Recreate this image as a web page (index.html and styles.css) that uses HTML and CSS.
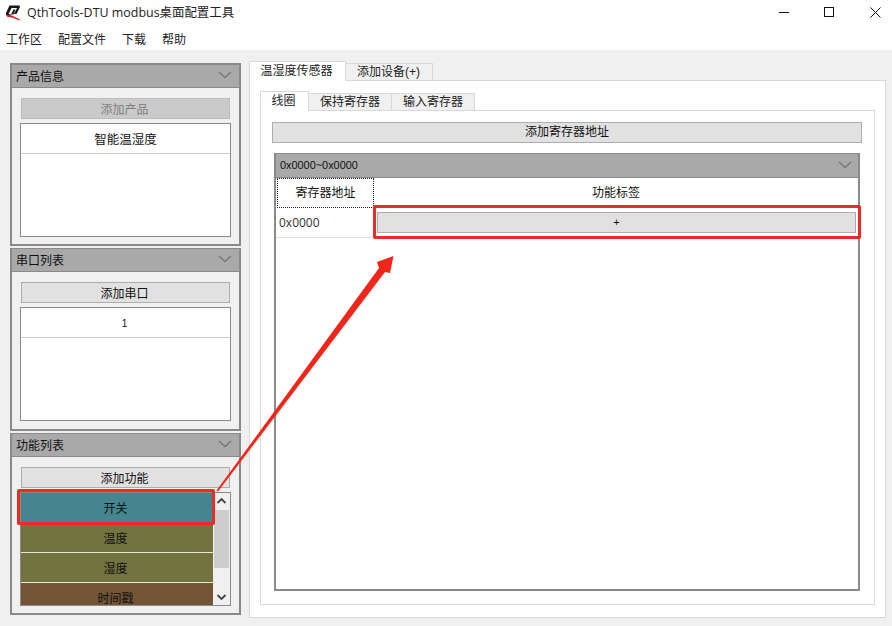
FILE: index.html
```html
<!DOCTYPE html>
<html lang="zh-CN">
<head>
<meta charset="utf-8">
<title>QthTools-DTU modbus桌面配置工具</title>
<link rel="stylesheet" href="styles.css">
</head>
<body>
<div class="window">
  <header class="titlebar">
    <svg class="logo" width="16" height="16" viewBox="0 0 16 16">
      <path d="M4.500 .5H14.500L15 2L11.500 9H9L12 3H6.500L3.500 9L6 9.500L5.500 11L1 10L1 8Z" fill="#161616"/>
      <path d="M6 9.500L8.500 4.500H10.500L8.500 9.500Z" fill="#161616"/>
      <path d="M1 10L7 10.500L15 14.500L14.500 15.500L7 12.500L2.500 12Z" fill="#d3222c"/>
    </svg>
    <span class="title">QthTools-DTU modbus桌面配置工具</span>
    <div class="controls">
      <svg width="11" height="11" viewBox="0 0 11 11"><path d="M1 5.500h10" stroke="#111" fill="none"/></svg>
      <svg width="11" height="11" viewBox="0 0 11 11"><rect x=".5" y=".5" width="9" height="9" stroke="#111" fill="none"/></svg>
      <svg width="11" height="11" viewBox="0 0 11 11"><path d="M.5.5l10 10M10.500.5l-10 10" stroke="#111" fill="none"/></svg>
    </div>
  </header>
  <nav class="menubar">
    <span>工作区</span><span>配置文件</span><span>下载</span><span>帮助</span>
  </nav>
  <main class="main">
    <aside class="sidebar">
      <section class="section section-first">
        <div class="section-head"><span>产品信息</span><svg class="chev" width="14" height="8" viewBox="0 0 14 8"><path d="M1 1l6 5.500 6-5.500" stroke="#777" stroke-width="1.300" fill="none"/></svg></div>
        <div class="section-body">
          <div class="btn btn-disabled">添加产品</div>
          <div class="list">
            <div class="list-item">智能温湿度</div>
          </div>
        </div>
      </section>
      <section class="section">
        <div class="section-head"><span>串口列表</span><svg class="chev" width="14" height="8" viewBox="0 0 14 8"><path d="M1 1l6 5.500 6-5.500" stroke="#777" stroke-width="1.300" fill="none"/></svg></div>
        <div class="section-body">
          <div class="btn">添加串口</div>
          <div class="list">
            <div class="list-item list-num">1</div>
          </div>
        </div>
      </section>
      <section class="section section-last">
        <div class="section-head"><span>功能列表</span><svg class="chev" width="14" height="8" viewBox="0 0 14 8"><path d="M1 1l6 5.500 6-5.500" stroke="#777" stroke-width="1.300" fill="none"/></svg></div>
        <div class="section-body">
          <div class="btn">添加功能</div>
          <div class="list list-scroll">
            <div class="func-items">
              <div class="func func-teal">开关</div>
              <div class="func func-olive">温度</div>
              <div class="func func-olive">湿度</div>
              <div class="func func-brown">时间戳</div>
            </div>
            <div class="scrollbar">
              <svg class="sb-arrow" width="17" height="17" viewBox="0 0 17 17"><path d="M4.500 10l4-4 4 4" stroke="#444" stroke-width="1.800" fill="none"/></svg>
              <div class="sb-track"><div class="sb-thumb"></div></div>
              <svg class="sb-arrow" width="17" height="17" viewBox="0 0 17 17"><path d="M4.500 7l4 4 4-4" stroke="#444" stroke-width="1.800" fill="none"/></svg>
            </div>
          </div>
        </div>
      </section>
    </aside>
    <div class="content">
      <div class="tabs tabs-outer">
        <div class="tab tab-active tab-w1">温湿度传感器</div>
        <div class="tab tab-w2">添加设备(+)</div>
      </div>
      <div class="pane">
        <div class="tabs">
          <div class="tab tab-active tab-w3">线圈</div>
          <div class="tab tab-w4">保持寄存器</div>
          <div class="tab tab-w4">输入寄存器</div>
        </div>
        <div class="inner-pane">
          <div class="btn btn-wide">添加寄存器地址</div>
          <div class="reg-box">
            <div class="reg-head"><span>0x0000~0x0000</span><svg class="chev" width="14" height="8" viewBox="0 0 14 8"><path d="M1 1l6 5.500 6-5.500" stroke="#777" stroke-width="1.300" fill="none"/></svg></div>
            <div class="reg-row reg-row-head">
              <div class="cell-addr cell-focus">寄存器地址</div>
              <div class="cell-label">功能标签</div>
            </div>
            <div class="reg-row reg-row-data">
              <div class="cell-addr cell-value">0x0000</div>
              <div class="cell-label"><div class="btn btn-plus">+</div></div>
            </div>
          </div>
        </div>
      </div>
    </div>
  </main>
  <div class="mark mark-left"></div>
  <div class="mark mark-right"></div>
  <svg class="arrow" width="892" height="626" viewBox="0 0 892 626">
    <path d="M216.500 490.500L379 268L377 262L393.500 256L390 273L385 272L218 491.500Z" fill="#f1261a"/>
  </svg>
</div>
</body>
</html>
```
FILE: styles.css
```css
* { box-sizing: border-box; }
html, body { margin: 0; padding: 0; }
body {
  font-family: "Liberation Sans", "Noto Sans CJK SC", sans-serif;
  font-size: 12px;
  color: #111;
  background: #f0f0f0;
}
.window {
  position: relative;
  width: 892px;
  height: 626px;
  overflow: hidden;
  display: flex;
  flex-direction: column;
}
.titlebar {
  height: 25px;
  background: #fff;
  display: flex;
  align-items: center;
  padding-left: 5px;
  flex: none;
}
.logo { flex: none; margin-right: 6px; }
.title {
  font-family: "Open Sans", "Noto Sans CJK SC", sans-serif;
  font-size: 12.450px;
  color: #222;
  padding-bottom: 2px;
}
.controls {
  margin-left: auto;
  display: flex;
  gap: 35px;
  padding-right: 11px;
}
.menubar {
  height: 25px;
  background: #fff;
  display: flex;
  align-items: center;
  gap: 16px;
  padding-left: 6px;
  padding-top: 1px;
  flex: none;
  color: #222;
}
.main {
  flex: 1;
  display: flex;
  gap: 8px;
  padding: 13px 6px 9px 10px;
  min-height: 0;
}
.sidebar {
  width: 231px;
  flex: none;
  display: flex;
  flex-direction: column;
  gap: 2px;
}
.section {
  height: 183px;
  border: 2px solid #8a8a8a;
  border-top-width: 1px;
  flex: none;
}
.section-first { border-top-width: 2px; }
.section-last { height: 182px; }
.section-head {
  height: 23px;
  background: #a9a9a9;
  border-bottom: 1px solid #8a8a8a;
  display: flex;
  align-items: center;
  justify-content: space-between;
  padding: 0 7px 2px 4px;
  color: #111;
}
.section-body { padding: 10px 8px 0; }
.btn {
  height: 21px;
  background: #e1e1e1;
  border: 1px solid #adadad;
  text-align: center;
  line-height: 22px;
  margin: 0 1px;
  padding-right: 2px;
  color: #111;
}
.btn-disabled {
  background: #cacaca;
  border-color: #bdbdbd;
  color: #808080;
}
.list {
  height: 114px;
  margin-top: 4px;
  width: 211px;
  background: #fff;
  border: 1px solid #8a8a8a;
  overflow: hidden;
}
.list-item {
  height: 30px;
  border-bottom: 1px solid #cfcfcf;
  text-align: center;
  line-height: 32px;
  font-size: 12.500px;
}
.list-num { font-size: 10px; padding-right: 2px; }
.list-scroll { display: flex; }
.func-items { flex: 1; min-width: 0; }
.func {
  height: 30px;
  text-align: center;
  line-height: 32px;
  padding-right: 3px;
  border-bottom: 1px solid #e8e6d8;
  overflow: hidden;
}
.func-teal { background: #44858f; }
.func-olive { background: #72733f; }
.func-brown { background: #735435; }
.scrollbar {
  width: 17px;
  flex: none;
  background: #f0f0f0;
  display: flex;
  flex-direction: column;
}
.sb-arrow { flex: none; display: block; }
.sb-track { flex: 1; min-height: 0; }
.sb-thumb {
  height: 58px;
  background: #cdcdcd;
  margin: 0 1px;
}
.content {
  flex: 1;
  min-width: 0;
  display: flex;
  flex-direction: column;
  height: 554px;
}
.tabs {
  display: flex;
  align-items: flex-end;
  flex: none;
}
.tabs-outer { height: 19px; margin-top: -2px; }
.tab {
  height: 17px;
  background: #f0f0f0;
  border: 1px solid #d9d9d9;
  border-bottom: 0;
  text-align: center;
  line-height: 16px;
  color: #222;
  margin-left: -1px;
}
.tab:first-child { margin-left: 0; }
.tab-active {
  height: 20px;
  background: #fff;
  position: relative;
  margin-bottom: -1px;
  z-index: 1;
  line-height: 19px;
  padding-right: 2px;
}
.tab-w1 { width: 97px; }
.tab-w2 { width: 88px; padding-right: 1px; }
.tab-w3 { width: 49px; }
.tab-w4 { width: 84px; }
.pane {
  width: 637px;
  height: 538px;
  background: #fff;
  border: 1px solid #d9d9d9;
  padding: 10px 11px 12px 10px;
  display: flex;
  flex-direction: column;
}
.pane > .tabs { height: 19px; }
.inner-pane {
  width: 615px;
  height: 496px;
  border: 1px solid #d9d9d9;
  padding: 11px 11px 0;
}
.btn-wide { margin: 0; width: 590px; line-height: 19px; padding-right: 0; }
.reg-box {
  margin: 10px 0 0 2px;
  width: 586px;
  height: 438px;
  border: 2px solid #8a8a8a;
}
.reg-head {
  height: 24px;
  background: #a9a9a9;
  margin-top: -1px;
  border-bottom: 1px solid #8a8a8a;
  display: flex;
  align-items: center;
  justify-content: space-between;
  padding: 0 6px 2px 4px;
  font-size: 10.900px;
}
.reg-row { display: flex; }
.reg-row-head { height: 30px; }
.reg-row-data { height: 31px; border-bottom: 1px solid #ddd; margin-top: -1px; }
.cell-addr { width: 98px; flex: none; }
.cell-focus {
  border: 1px dotted #222;
  margin-left: 1px;
  width: 97px;
  text-align: center;
  line-height: 29px;
}
.cell-value {
  padding-left: 3px;
  line-height: 32px;
  font-family: "Open Sans", "Noto Sans CJK SC", sans-serif;
  font-size: 12px;
  color: #333;
}
.cell-label { flex: 1; min-width: 0; text-align: center; line-height: 31px; }
.btn-plus {
  margin: 5px 2px 0 3px;
  line-height: 19px;
  font-size: 11px;
  padding-right: 0;
}
.mark {
  position: absolute;
  border: 3px solid #ee2a24;
  border-radius: 2px;
  pointer-events: none;
}
.mark-left { left: 17px; top: 489px; width: 198px; height: 36px; }
.mark-right { left: 373px; top: 205px; width: 488px; height: 34px; }
.arrow { position: absolute; left: 0; top: 0; pointer-events: none; }
```
